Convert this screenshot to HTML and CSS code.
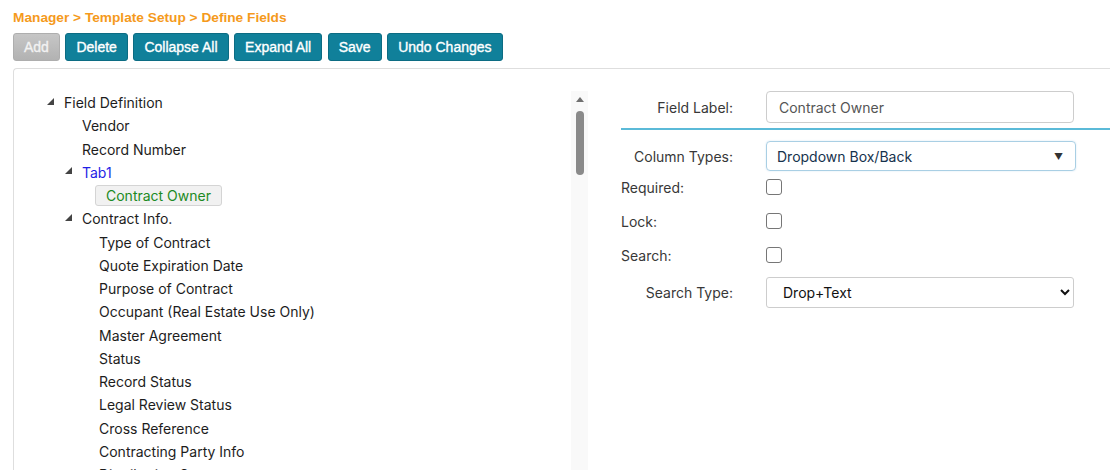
FILE: index.html
```html
<!DOCTYPE html>
<html>
<head>
  <title>Define Fields</title>
  <link rel="stylesheet" href="styles.css">
</head>
<body>
  <div class="crumb">Manager &gt; Template Setup &gt; Define Fields</div>
  <div class="toolbar">
    <button class="btn btn-off">Add</button>
    <button class="btn">Delete</button>
    <button class="btn">Collapse All</button>
    <button class="btn">Expand All</button>
    <button class="btn">Save</button>
    <button class="btn">Undo Changes</button>
  </div>

  <div class="panel">
    <div class="tree-col">
      <div class="tree">
        <div class="node lv0"><span class="tog"><svg width="7" height="7" viewBox="0 0 7 7"><polygon points="7,0 7,7 0,7" fill="#444"/></svg></span><span>Field Definition</span></div>
        <div class="node lv1"><span class="tog"></span><span>Vendor</span></div>
        <div class="node lv1"><span class="tog"></span><span>Record Number</span></div>
        <div class="node lv1"><span class="tog"><svg width="7" height="7" viewBox="0 0 7 7"><polygon points="7,0 7,7 0,7" fill="#444"/></svg></span><span class="tab">Tab1</span></div>
        <div class="node lv2"><span class="tog"></span><span class="sel">Contract Owner</span></div>
        <div class="node lv1"><span class="tog"><svg width="7" height="7" viewBox="0 0 7 7"><polygon points="7,0 7,7 0,7" fill="#444"/></svg></span><span>Contract Info.</span></div>
        <div class="node lv2"><span class="tog"></span><span>Type of Contract</span></div>
        <div class="node lv2"><span class="tog"></span><span>Quote Expiration Date</span></div>
        <div class="node lv2"><span class="tog"></span><span>Purpose of Contract</span></div>
        <div class="node lv2"><span class="tog"></span><span>Occupant (Real Estate Use Only)</span></div>
        <div class="node lv2"><span class="tog"></span><span>Master Agreement</span></div>
        <div class="node lv2"><span class="tog"></span><span>Status</span></div>
        <div class="node lv2"><span class="tog"></span><span>Record Status</span></div>
        <div class="node lv2"><span class="tog"></span><span>Legal Review Status</span></div>
        <div class="node lv2"><span class="tog"></span><span>Cross Reference</span></div>
        <div class="node lv2"><span class="tog"></span><span>Contracting Party Info</span></div>
        <div class="node lv2"><span class="tog"></span><span>Distribution Group</span></div>
      </div>
      <div class="vscroll">
        <div class="up"></div>
        <div class="thumb"></div>
      </div>
    </div>

    <div class="form-col">
      <div class="frow">
        <label class="flabel">Field Label:</label>
        <input class="txtbox" type="text" value="Contract Owner">
      </div>
      <div class="rule"></div>
      <div class="frow">
        <label class="flabel">Column Types:</label>
        <div class="combo"><span>Dropdown Box/Back</span><span class="arrow">&#9660;</span></div>
      </div>
      <div class="frow crow first">
        <label class="flabel left">Required:</label>
        <input class="chk" type="checkbox">
      </div>
      <div class="frow crow">
        <label class="flabel left">Lock:</label>
        <input class="chk" type="checkbox">
      </div>
      <div class="frow crow">
        <label class="flabel left">Search:</label>
        <input class="chk" type="checkbox">
      </div>
      <div class="frow srow">
        <label class="flabel">Search Type:</label>
        <select class="sel-native">
          <option>Drop+Text</option>
          <option>Dropdown</option>
          <option>Text</option>
        </select>
      </div>
    </div>
  </div>
</body>
</html>
```

FILE: styles.css
```css
body {
  margin: 0;
  background: #fff;
  font-family: Inter, "Liberation Sans", sans-serif;
  font-size: 14px;
  color: #1d1d1d;
  overflow: hidden;
}
.crumb {
  padding: 10px 13px 0;
  height: 16px;
  line-height: 16px;
  font-family: "Liberation Sans", Arial, sans-serif;
  font-size: 13.7px;
  font-weight: bold;
  color: #f59a1c;
}
.toolbar {
  display: flex;
  gap: 5.5px;
  padding: 7px 13px 0;
}
.btn {
  height: 28px;
  padding: 0 10px;
  border: 1px solid #0c6c83;
  border-radius: 3px;
  background: #10809a;
  color: #fff;
  font-family: "Liberation Sans", Arial, sans-serif;
  font-size: 14px;
  -webkit-text-stroke: 0.35px #fff;
  cursor: pointer;
}
.btn-off {
  background: linear-gradient(#c6c6c6, #b2b2b2);
  border-color: #aeaeae;
  color: #f2f2f2;
  -webkit-text-stroke: 0.35px #f2f2f2;
  cursor: default;
}
.panel {
  display: flex;
  margin: 7px 0 0 13px;
  padding-top: 22px;
  border-top: 1px solid #dedede;
  border-left: 1px solid #dedede;
  border-top-left-radius: 4px;
  height: 500px;
}
.tree-col {
  display: flex;
  width: 558px;
  padding-left: 16px;
}
.tree {
  flex: 1;
  overflow: hidden;
}
.node {
  display: flex;
  align-items: center;
  height: 23.25px;
  white-space: nowrap;
}
.lv0 { padding-left: 16px; }
.lv1 { padding-left: 34px; }
.lv2 { padding-left: 51px; }
.tog {
  width: 18px;
  flex: none;
}
.tog svg {
  display: block;
  margin: -3px 0 0 1px;
}
.tab {
  color: #1f1fe6;
}
.sel {
  margin-left: -4px;
  padding: 1px 10px;
  background: #f1f1f1;
  border: 1px solid #d4d4d4;
  border-radius: 3px;
  color: #1c8a24;
}
.vscroll {
  width: 17px;
  background: #f9f9f9;
  display: flex;
  flex-direction: column;
  align-items: center;
}
.up {
  margin-top: 6px;
  width: 0;
  height: 0;
  border-left: 4px solid transparent;
  border-right: 4px solid transparent;
  border-bottom: 5px solid #707070;
}
.thumb {
  margin-top: 9px;
  width: 8px;
  height: 64px;
  border-radius: 4px;
  background: #8a8a8a;
}
.form-col {
  flex: 1;
  margin-left: 33px;
  display: flex;
  flex-direction: column;
}
.frow {
  display: flex;
  align-items: center;
}
.flabel {
  width: 112px;
  margin-right: 33px;
  text-align: right;
  color: #383838;
}
.flabel.left {
  text-align: left;
}
.txtbox {
  box-sizing: border-box;
  width: 308px;
  height: 32px;
  margin: 0;
  padding: 0 12px;
  border: 1px solid #cdcdcd;
  border-radius: 4px;
  font-family: Inter, sans-serif;
  font-size: 14px;
  color: #555;
}
.rule {
  height: 2px;
  background: #5bbad8;
  margin: 5px 0 11px;
}
.combo {
  box-sizing: border-box;
  width: 310px;
  height: 30px;
  padding: 0 12px 0 10px;
  border: 1px solid #a9cfe4;
  border-radius: 4px;
  box-shadow: 0 0 2px #d3e6f2;
  display: flex;
  align-items: center;
  justify-content: space-between;
  color: #16324d;
}
.arrow {
  font-size: 9px;
  color: #333;
}
.crow {
  height: 16px;
  margin-top: 18px;
}
.crow.first {
  margin-top: 8px;
}
.chk {
  appearance: none;
  width: 16px;
  height: 16px;
  margin: 0;
  border: 1px solid #767676;
  border-radius: 3px;
  background: #fff;
}
.srow {
  margin-top: 14px;
}
.sel-native {
  box-sizing: border-box;
  width: 308px;
  height: 31px;
  padding: 0 6px 0 12px;
  border: 1px solid #cdcdcd;
  border-radius: 3px;
  background: #fff;
  font-family: Inter, sans-serif;
  font-size: 14px;
  color: #111;
}
```
